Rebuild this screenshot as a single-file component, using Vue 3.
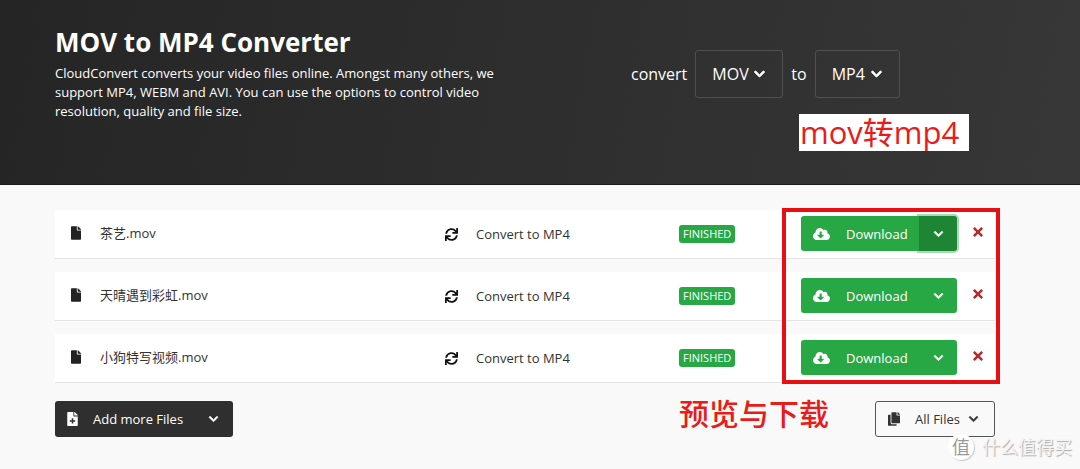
<script setup>
import { ref } from 'vue'

const from = ref('MOV')
const to = ref('MP4')
const files = [
  { name: '茶艺.mov', open: true },
  { name: '天晴遇到彩虹.mov', open: false },
  { name: '小狗特写视频.mov', open: false },
]

const chevron =
  'M207.029 381.476L12.686 187.132c-9.373-9.373-9.373-24.569 0-33.941l22.667-22.667c9.357-9.357 24.522-9.375 33.901-.04L224 284.505l154.745-154.021c9.379-9.335 24.544-9.317 33.901.04l22.667 22.667c9.373 9.373 9.373 24.569 0 33.941L240.971 381.476c-9.373 9.372-24.569 9.372-33.942 0z'
const fileShape =
  'M224 136V0H24C10.7 0 0 10.7 0 24v464c0 13.3 10.7 24 24 24h336c13.3 0 24-10.7 24-24V160H248c-13.2 0-24-10.8-24-24zm160-14.1v6.1H256V0h6.1c6.4 0 12.5 2.5 17 7l97.9 98c4.5 4.5 7 10.6 7 16.9z'
const plusCut =
  'M164 232v72H92v48h72v72h56v-72h72v-48h-72v-72z'
const sync =
  'M440.65 12.57l4 82.77A247.16 247.16 0 0 0 255.83 8C134.73 8 33.91 94.92 12.29 209.82A12 12 0 0 0 24.09 224h49.05a12 12 0 0 0 11.67-9.26 175.91 175.91 0 0 1 317-56.94l-101.46-4.86a12 12 0 0 0-12.57 12v47.41a12 12 0 0 0 12 12H500a12 12 0 0 0 12-12V12a12 12 0 0 0-12-12h-47.37a12 12 0 0 0-11.98 12.57zM255.83 432a175.61 175.61 0 0 1-146-77.8l101.8 4.87a12 12 0 0 0 12.57-12v-47.4a12 12 0 0 0-12-12H12a12 12 0 0 0-12 12V500a12 12 0 0 0 12 12h47.35a12 12 0 0 0 12-12.6l-4.15-82.57A247.17 247.17 0 0 0 255.83 504c121.11 0 221.93-86.92 243.55-201.82a12 12 0 0 0-11.8-14.18h-49.05a12 12 0 0 0-11.67 9.26A175.86 175.86 0 0 1 255.83 432z'
const cloud =
  'M537.6 226.6c4.1-10.7 6.4-22.4 6.4-34.6 0-53-43-96-96-96-19.7 0-38.1 6-53.3 16.2C367 64.2 315.3 32 256 32c-88.4 0-160 71.6-160 160 0 2.7.1 5.4.2 8.1C40.2 219.8 0 273.2 0 336c0 79.5 64.5 144 144 144h368c70.7 0 128-57.3 128-128 0-61.9-44-113.6-102.4-125.4zm-132.9 88.7L299.3 420.7c-6.2 6.2-16.4 6.2-22.6 0L171.3 315.3c-10.1-10.1-2.9-27.3 11.3-27.3H248V176c0-8.8 7.2-16 16-16h48c8.8 0 16 7.2 16 16v112h65.4c14.2 0 21.4 17.2 11.3 27.3z'
const cross =
  'M242.72 256l100.07-100.07c12.28-12.28 12.28-32.19 0-44.48l-22.24-22.24c-12.28-12.28-32.19-12.28-44.48 0L176 189.28 75.93 89.21c-12.28-12.28-32.19-12.28-44.48 0L9.21 111.45c-12.28 12.28-12.28 32.19 0 44.48L109.28 256 9.21 356.07c-12.28 12.28-12.28 32.19 0 44.48l22.24 22.24c12.28 12.28 32.2 12.28 44.48 0L176 322.72l100.07 100.07c12.28 12.28 32.2 12.28 44.48 0l22.24-22.24c12.28-12.28 12.28-32.19 0-44.48L242.72 256z'
const copy =
  'M320 448v40c0 13.255-10.745 24-24 24H24c-13.255 0-24-10.745-24-24V120c0-13.255 10.745-24 24-24h72v296c0 30.879 25.121 56 56 56h168zm0-344V0H152c-13.255 0-24 10.745-24 24v368c0 13.255 10.745 24 24 24h272c13.255 0 24-10.745 24-24V128H344c-13.2 0-24-10.8-24-24zm120.971-31.029L375.029 7.029A24 24 0 0 0 358.059 0H352v96h96v-6.059a24 24 0 0 0-7.029-16.97z'
</script>

<template>
  <div class="page">
    <header class="hero">
      <div class="intro">
        <h1>MOV to MP4 Converter</h1>
        <p>
          CloudConvert converts your video files online. Amongst many others, we
          support MP4, WEBM and AVI. You can use the options to control video
          resolution, quality and file size.
        </p>
      </div>
      <div class="picker">
        <label for="from">convert</label>
        <span class="select">
          <select id="from" v-model="from"><option>MOV</option></select>
          <svg class="chev" viewBox="0 0 448 512"><path :d="chevron" /></svg>
        </span>
        <label for="to">to</label>
        <span class="select">
          <select id="to" v-model="to"><option>MP4</option></select>
          <svg class="chev" viewBox="0 0 448 512"><path :d="chevron" /></svg>
        </span>
        <span class="note note-top">mov转mp4</span>
      </div>
    </header>

    <main class="content">
      <table class="files">
        <colgroup>
          <col />
          <col class="c-task" />
          <col class="c-state" />
          <col class="c-act" />
        </colgroup>
        <tbody>
          <tr v-for="f in files" :key="f.name">
            <td>
              <div class="cell name">
                <svg class="file" viewBox="0 0 384 512"><path :d="fileShape" /></svg>
                <span>{{ f.name }}</span>
              </div>
            </td>
            <td>
              <div class="cell task">
                <svg class="sync" viewBox="0 0 512 512"><path :d="sync" /></svg>
                <span>Convert to MP4</span>
              </div>
            </td>
            <td>
              <div class="cell state"><span class="badge">FINISHED</span></div>
            </td>
            <td>
              <div class="cell actions">
                <div class="split">
                  <button type="button" class="download">
                    <svg class="cloud" viewBox="0 0 640 512"><path :d="cloud" /></svg>
                    <span>Download</span>
                  </button>
                  <button type="button" class="more" :class="{ open: f.open }" aria-label="More options">
                    <svg class="chev" viewBox="0 0 448 512"><path :d="chevron" /></svg>
                  </button>
                </div>
                <button type="button" class="remove" aria-label="Remove">
                  <svg class="cross" viewBox="0 0 352 512"><path :d="cross" /></svg>
                </button>
              </div>
            </td>
          </tr>
        </tbody>
      </table>
      <div class="frame"></div>

      <div class="footer">
        <button type="button" class="add">
          <svg class="file" viewBox="0 0 384 512"><path fill-rule="evenodd" :d="fileShape + plusCut" /></svg>
          <span>Add more Files</span>
          <svg class="chev" viewBox="0 0 448 512"><path :d="chevron" /></svg>
        </button>
        <span class="note note-bottom">预览与下载</span>
        <button type="button" class="all">
          <svg class="copy" viewBox="0 0 448 512"><path :d="copy" /></svg>
          <span>All Files</span>
          <svg class="chev" viewBox="0 0 448 512"><path :d="chevron" /></svg>
        </button>
      </div>
    </main>

    <div class="watermark"><span class="seal">值</span><span>什么值得买</span></div>
  </div>
</template>

<style>
body {
  margin: 0;
  background: #f9f9f9;
}
</style>

<style scoped>
.page {
  position: relative;
  min-height: 100vh;
  overflow: hidden;
  background: #f9f9f9;
  color: #333;
  font: 13px/20px "Open Sans", "Noto Sans CJK SC", sans-serif;
}
* {
  box-sizing: border-box;
}
svg {
  display: block;
  flex: none;
  fill: currentColor;
}
button,
select {
  margin: 0;
  padding: 0;
  border: 0;
  background: none;
  color: inherit;
  font: inherit;
}
.hero {
  display: grid;
  grid-template-columns: 576px 1fr;
  padding: 26px 55px 63px;
  background: linear-gradient(100deg, #252525, #373737);
  border-bottom: 1px solid #1c1c1c;
  color: #fff;
}
h1 {
  margin: 0;
  font-size: 26px;
  line-height: 32px;
  font-weight: 700;
}
p {
  margin: 6px 0 0;
  max-width: 450px;
  font-size: 13px;
  line-height: 19px;
}
.picker {
  position: relative;
  display: flex;
  align-items: center;
  align-self: start;
  gap: 8px;
  padding-top: 24px;
  font-size: 16px;
}
.select {
  position: relative;
  display: flex;
  align-items: center;
}
.select select {
  appearance: none;
  height: 48px;
  padding: 0 33px 0 16px;
  border: 1px solid #505050;
  border-radius: 3px;
}
.select .chev {
  position: absolute;
  right: 18px;
  width: 11px;
  pointer-events: none;
}
.chev {
  width: 10px;
  height: 12px;
  overflow: visible;
  stroke: currentColor;
  stroke-width: 30px;
}
.note {
  color: #e81c1a;
}
.note-top {
  position: absolute;
  top: 88px;
  left: 168px;
  padding: 0 10px 0 1px;
  background: #fff;
  font-size: 31px;
  line-height: 37px;
  white-space: nowrap;
}
.content {
  position: relative;
  padding: 12px 85px 30px 55px;
}
.files {
  width: 100%;
  table-layout: fixed;
  border-collapse: separate;
  border-spacing: 0 13px;
}
.c-task {
  width: 239px;
}
.c-state {
  width: 122px;
}
.c-act {
  width: 194px;
}
td {
  height: 49px;
  padding: 0;
  background: #fff;
  border-bottom: 1px solid #e4e4e4;
}
.cell {
  display: flex;
  align-items: center;
}
.name {
  gap: 19px;
  padding: 0 0 2px 16px;
}
.file {
  width: 10px;
  height: 14px;
  color: #222;
}
.task {
  gap: 18px;
  padding-left: 5px;
}
.sync {
  width: 13px;
  height: 13px;
  color: #111;
}
.badge {
  padding: 0 4px;
  border-radius: 3px;
  background: #28a745;
  color: #fff;
  font-size: 11px;
  line-height: 18px;
}
.split {
  display: flex;
  color: #fff;
}
.download {
  display: flex;
  align-items: center;
  gap: 16px;
  width: 118px;
  height: 35px;
  padding-left: 12px;
  background: #28a745;
  border-radius: 3px 0 0 3px;
}
.cloud {
  width: 17px;
  height: 14px;
}
.more {
  display: flex;
  align-items: center;
  justify-content: center;
  width: 38px;
  height: 35px;
  background: #28a745;
  border-radius: 0 3px 3px 0;
}
.more.open {
  background: #1e8535;
  box-shadow: 0 0 0 2px rgba(40, 167, 69, 0.4);
}
.more .chev,
.footer .chev {
  width: 9px;
}
.state {
  padding-bottom: 1px;
}
.actions {
  gap: 16px;
  padding-bottom: 1px;
}
.remove {
  padding-bottom: 3px;
  color: #b32b2b;
}
.cross {
  width: 10px;
  height: 14px;
}
.frame {
  position: absolute;
  top: 23px;
  right: 80px;
  width: 218px;
  height: 176px;
  border: 4px solid #e80f12;
  pointer-events: none;
}
.footer {
  display: flex;
  align-items: center;
  margin-top: 5px;
}
.add,
.all {
  display: flex;
  align-items: center;
  height: 36px;
  border-radius: 3px;
}
.add {
  width: 178px;
  padding-left: 12px;
  gap: 15px;
  background: #2f2f2f;
  color: #fff;
}
.add .file {
  width: 11px;
  color: #fff;
}
.add .chev {
  margin-left: 11px;
}
.note-bottom {
  margin-left: auto;
  margin-right: 46px;
  padding-bottom: 10px;
  font-size: 30px;
  font-weight: 500;
  line-height: 26px;
}
.all {
  width: 120px;
  padding-left: 12px;
  border: 1px solid #555;
}
.copy {
  width: 12px;
  height: 14px;
  margin-right: 15px;
}
.all .chev {
  margin-left: 9px;
}
.watermark {
  position: absolute;
  right: 8px;
  bottom: 9px;
  display: flex;
  align-items: center;
  gap: 8px;
  color: #f4f4f4;
  font-size: 18px;
  line-height: 26px;
  text-shadow: 1px 1px 1px #aaa;
}
.seal {
  width: 26px;
  height: 26px;
  border-radius: 50%;
  background: #fff;
  color: #999;
  text-align: center;
  text-shadow: none;
  box-shadow: 1px 1px 1px #ccc;
}
</style>
